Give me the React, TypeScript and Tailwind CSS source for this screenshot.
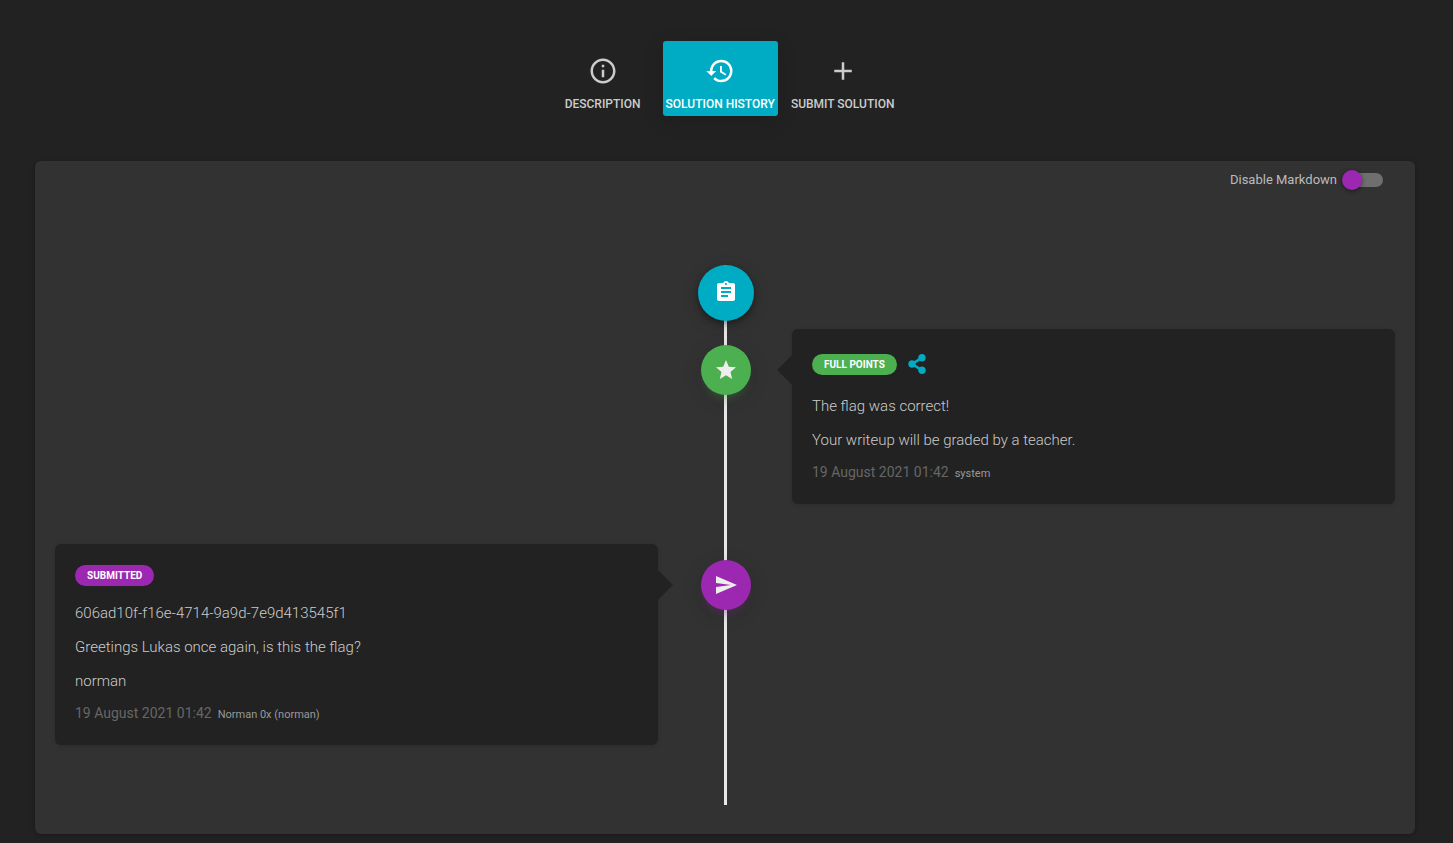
import type { ReactNode } from "react";
import { FaShareAlt } from "react-icons/fa";
import {
  MdAdd,
  MdAssignment,
  MdGrade,
  MdHistory,
  MdInfoOutline,
  MdSend,
} from "react-icons/md";

type TabProps = { icon: ReactNode; label: string; active?: boolean };

function Tab({ icon, label, active = false }: TabProps) {
  const look = active
    ? "bg-[#00acc4] text-white shadow-[0_5px_20px_rgba(0,0,0,0.14)]"
    : "text-[#cccccc]";
  return (
    <button
      type="button"
      role="tab"
      aria-selected={active}
      className={`flex min-w-[100px] cursor-pointer flex-col items-center gap-1.5 rounded-[3px] px-[3px] pt-[15px] text-xs leading-6 font-medium whitespace-nowrap uppercase ${look}`}
    >
      {icon}
      {label}
    </button>
  );
}

type EntryProps = {
  side: "left" | "right";
  icon: ReactNode;
  markerClass: string;
  header: ReactNode;
  lines: string[];
  date: string;
  author: string;
};

function Entry({ side, icon, markerClass, header, lines, date, author }: EntryProps) {
  const left = side === "left";
  return (
    <li className="grid grid-cols-[45%_1fr_45%] items-start">
      <article
        className={`relative row-start-1 rounded-md bg-[#222222] px-5 pt-5 pb-[18px] shadow-[0_1px_4px_rgba(0,0,0,0.14)] ${left ? "col-start-1" : "col-start-3"}`}
      >
        <span
          aria-hidden="true"
          className={`absolute top-[26px] border-y-[15px] border-y-transparent ${
            left
              ? "left-full border-l-[15px] border-l-[#222222]"
              : "right-full border-r-[15px] border-r-[#222222]"
          }`}
        />
        {header}
        <div className="mt-3.5 flex flex-col gap-2.5 text-[15px] leading-6 font-light text-[#cccccc]">
          {lines.map((line) => (
            <p key={line}>{line}</p>
          ))}
        </div>
        <footer className="mt-2 flex items-baseline gap-1.5 leading-6">
          <time className="text-sm leading-6 text-[#666666]">{date}</time>
          <span className="text-[11px] leading-6 text-[#999999]">{author}</span>
        </footer>
      </article>
      <div className="col-start-2 row-start-1 flex justify-center pt-4 pl-0.5">
        <span
          className={`flex size-[50px] items-center justify-center rounded-full text-[#eeeeee] ${markerClass}`}
        >
          {icon}
        </span>
      </div>
    </li>
  );
}

const badge =
  "rounded-full px-3 text-[10px] leading-[21px] font-bold text-white uppercase";

export default function App() {
  return (
    <div className="min-h-screen bg-[#222222] pt-[41px] pr-[38px] pb-[9px] pl-[35px] font-[Roboto,sans-serif]">
      <div role="tablist" className="flex justify-center gap-2.5">
        <Tab icon={<MdInfoOutline size={30} />} label="Description" />
        <Tab icon={<MdHistory size={30} />} label="Solution History" active />
        <Tab icon={<MdAdd size={30} />} label="Submit Solution" />
      </div>

      <main className="mt-[45px] rounded-md bg-[#323232] px-5 pt-2 pb-[29px] shadow-[0_1px_4px_rgba(0,0,0,0.3)]">
        <div className="flex justify-end pr-3">
          <label className="flex h-[22px] cursor-pointer items-center gap-[5px] text-[13px] leading-5 text-[#bbbbbb]">
            Disable Markdown
            <input
              type="checkbox"
              role="switch"
              className="relative h-3.5 w-[41px] cursor-pointer appearance-none rounded-full bg-[#6f6f6f] bg-clip-content pl-[5px] before:absolute before:-top-[3px] before:left-0 before:size-5 before:rounded-full before:bg-[#9c27b0] before:shadow-[0_1px_4px_rgba(0,0,0,0.5)]"
            />
          </label>
        </div>

        <section className="relative isolate mt-[74px] pb-[60px]">
          <div
            aria-hidden="true"
            className="absolute inset-y-0 left-1/2 -z-10 -ml-px w-[3px] bg-[#e8e8e8]"
          />
          <div className="flex justify-center pl-0.5">
            <button
              type="button"
              aria-label="Assignment"
              className="flex size-14 cursor-pointer items-center justify-center rounded-full bg-[#00acc4] pb-0.5 text-white shadow-[0_3px_6px_rgba(0,0,0,0.35),0_4px_18px_rgba(0,0,0,0.14)]"
            >
              <MdAssignment size={24} />
            </button>
          </div>
          <ol className="mt-2 flex flex-col gap-10">
            <Entry
              side="right"
              icon={<MdGrade size={24} />}
              markerClass="bg-[#4caf50] shadow-[0_4px_20px_rgba(0,0,0,0.14),0_7px_10px_-5px_rgba(76,175,80,0.4)]"
              header={
                <header className="flex h-[31px] items-center gap-2.5">
                  <span className={`${badge} bg-[#4caf50]`}>Full points</span>
                  <button
                    type="button"
                    aria-label="Share"
                    className="cursor-pointer pb-0.5 text-[#00acc4]"
                  >
                    <FaShareAlt size={20} />
                  </button>
                </header>
              }
              lines={["The flag was correct!", "Your writeup will be graded by a teacher."]}
              date="19 August 2021 01:42"
              author="system"
            />
            <Entry
              side="left"
              icon={<MdSend size={24} />}
              markerClass="bg-[#9c27b0] shadow-[0_4px_20px_rgba(0,0,0,0.14),0_7px_10px_-5px_rgba(156,39,176,0.4)]"
              header={
                <header className="flex h-[23px] items-center">
                  <span className={`${badge} bg-[#9c27b0]`}>Submitted</span>
                </header>
              }
              lines={[
                "606ad10f-f16e-4714-9a9d-7e9d413545f1",
                "Greetings Lukas once again, is this the flag?",
                "norman",
              ]}
              date="19 August 2021 01:42"
              author="Norman 0x (norman)"
            />
          </ol>
        </section>
      </main>
    </div>
  );
}
